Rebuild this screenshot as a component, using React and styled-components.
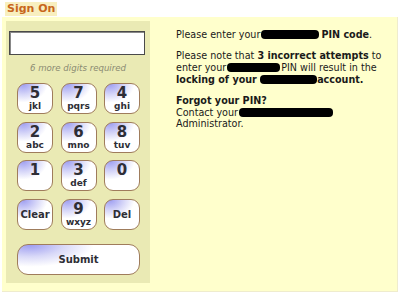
import React from "react";
import styled, { createGlobalStyle } from "styled-components";

const Global = createGlobalStyle`
  html, body { margin: 0; padding: 0; background: #ffffff; }
  body { font-family: "DejaVu Sans", Verdana, sans-serif; }
`;

const Page = styled.div`
  width: 409px;
  height: 300px;
  padding: 2px 0 0 2px;
  box-sizing: border-box;
`;

const Tab = styled.div`
  width: fit-content;
  margin-left: 3px;
  height: 14px;
  line-height: 14px;
  padding: 0 2px 0 2px;
  background: #f8efbf;
  color: #c8661c;
  font-weight: bold;
  font-size: 11px;
`;

const Panel = styled.div`
  margin-top: 1px;
  width: 396px;
  height: 275px;
  box-sizing: border-box;
  background: #ffffcc;
  border-right: 1px solid #efeccd;
  border-bottom: 1px solid #efeccd;
  display: flex;
  align-items: flex-start;
  padding: 4px 0 0 4px;
  gap: 26px;
`;

const Keypad = styled.div`
  width: 144px;
  height: 262px;
  background: #eaeab4;
  box-sizing: border-box;
  padding: 10px 0 0 3px;
  display: flex;
  flex-direction: column;
`;

const PinInput = styled.div`
  width: 136px;
  height: 24px;
  box-sizing: border-box;
  background: #ffffff;
  border: 1px solid #4a4a4a;
  box-shadow: inset 1px 1px 0 #888;
`;

const Hint = styled.div`
  width: 138px;
  text-align: center;
  font-style: italic;
  font-size: 8.6px;
  color: #8a8a72;
  margin-top: 7px;
  height: 12px;
  line-height: 12px;
`;

const Grid = styled.div`
  margin: 9px 0 0 8px;
  display: grid;
  grid-template-columns: repeat(3, 36px);
  grid-auto-rows: 31px;
  column-gap: 7.5px;
  row-gap: 7.7px;
`;

const Key = styled.div`
  box-sizing: border-box;
  border: 1px solid #9f7c5c;
  border-radius: 9px;
  background: radial-gradient(ellipse 90% 80% at 15% 0%, #9d9df1 0%, #d6d6f8 45%, #ffffff 80%);
  color: #2e2e36;
  font-weight: bold;
  display: flex;
  flex-direction: column;
  align-items: center;
  justify-content: ${(p) => (p.$word ? "center" : "flex-start")};
  padding-top: ${(p) => (p.$word ? "0" : "2px")};
`;

const Digit = styled.div`
  font-size: 15px;
  line-height: 15px;
`;

const Letters = styled.div`
  font-size: 9px;
  line-height: 11px;
`;

const Word = styled.div`
  font-size: 10px;
`;

const SubmitKey = styled(Key)`
  margin: 14px 0 0 8px;
  width: 123px;
  height: 31px;
  border-radius: 11px;
  font-size: 10px;
  background: radial-gradient(ellipse 70% 100% at 10% 0%, #9d9df1 0%, #d9d9f8 40%, #ffffff 75%);
`;

const Info = styled.div`
  padding-top: 8px;
  width: 220px;
  font-size: 9.6px;
  line-height: 11.7px;
  color: #1a1a1a;
`;

const Para = styled.p`
  margin: 0 0 9.5px 0;
`;

const Blob = styled.span`
  display: inline-block;
  width: ${(p) => p.$w}px;
  height: 9px;
  background: #000;
  border-radius: 4px;
  vertical-align: -1px;
  margin: ${(p) => p.$m || "0"};
`;

const keys = [
  ["5", "jkl"], ["7", "pqrs"], ["4", "ghi"],
  ["2", "abc"], ["6", "mno"], ["8", "tuv"],
  ["1", ""], ["3", "def"], ["0", ""],
  ["Clear", null], ["9", "wxyz"], ["Del", null],
];

export default function App() {
  return (
    <Page>
      <Global />
      <Tab>Sign On</Tab>
      <Panel>
        <Keypad>
          <PinInput />
          <Hint>6 more digits required</Hint>
          <Grid>
            {keys.map(([d, l]) =>
              l === null ? (
                <Key key={d} $word>
                  <Word>{d}</Word>
                </Key>
              ) : (
                <Key key={d}>
                  <Digit>{d}</Digit>
                  {l && <Letters>{l}</Letters>}
                </Key>
              )
            )}
          </Grid>
          <SubmitKey $word>Submit</SubmitKey>
        </Keypad>
        <Info>
          <Para>
            Please enter your<Blob $w={58} $m="0 2px 0 1px" />
            <b>PIN code</b>.
          </Para>
          <Para>
            Please note that <b>3 incorrect attempts</b> to
            <br />
            enter your<Blob $w={53} $m="0 1px 0 1px" />PIN will result in the
            <br />
            <b>
              locking of your <Blob $w={57} />account.
            </b>
          </Para>
          <Para>
            <b>Forgot your PIN?</b>
            <br />
            Contact your<Blob $w={94} $m="0 0 0 1px" />
            <br />
            Administrator.
          </Para>
        </Info>
      </Panel>
    </Page>
  );
}
